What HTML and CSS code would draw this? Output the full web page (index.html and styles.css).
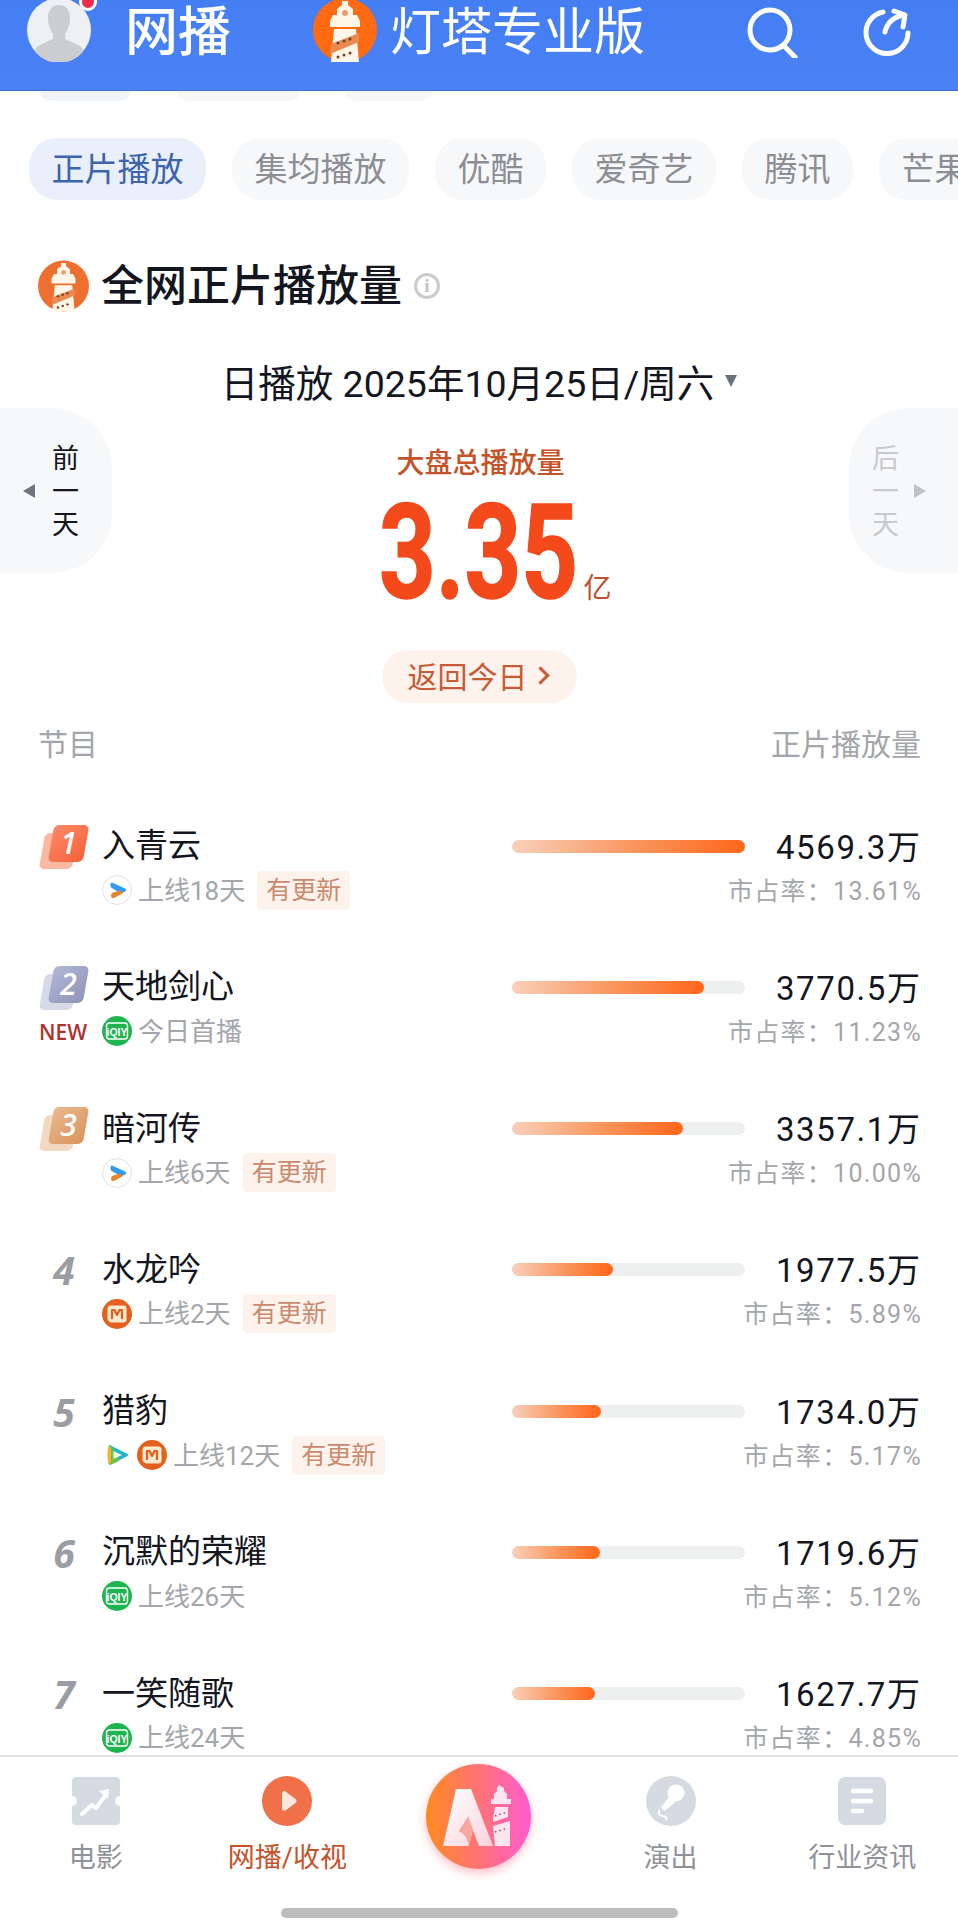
FILE: index.html
```html
<!DOCTYPE html>
<html lang="zh-CN">
<head>
    <meta charset="UTF-8">
    <meta name="viewport" content="width=device-width, initial-scale=1.0">
    <title>灯塔专业版 - 网播</title>
    <link rel="stylesheet" href="styles.css">
</head>
<body>
    <svg class="sprite" aria-hidden="true">
        <symbol id="tower" viewBox="0 0 64 64">
            <circle cx="32" cy="32" r="32" fill="currentColor"/>
            <path d="M29 3h6v4l5 4v6h4l3 6v6H17v-6l3-6h4v-6l5-4z" fill="#fff6ea"/>
            <circle cx="32" cy="15" r="3" fill="#e8a070"/>
            <path d="M21 31h22l3 33H18z" fill="#fff6ea"/>
            <path d="M18 46l28-11v9L17 56z" fill="#e98a52"/>
            <circle cx="25" cy="45" r="1.5" fill="#7a4020"/>
            <circle cx="31" cy="43" r="1.5" fill="#7a4020"/>
            <circle cx="37" cy="41" r="1.5" fill="#7a4020"/>
            <circle cx="25" cy="59" r="1.5" fill="#7a4020"/>
            <circle cx="31" cy="57" r="1.5" fill="#7a4020"/>
            <circle cx="37" cy="55" r="1.5" fill="#7a4020"/>
        </symbol>
        <symbol id="youku" viewBox="0 0 30 30">
            <circle cx="15" cy="15" r="14.4" fill="#fff" stroke="#dfe1e4" stroke-width="1"/>
            <path d="M10 7.500L23 13.500Q25.500 15 23 16.500L19 18.500L9 12.500Q7.500 8 10 7.500z" fill="#2f9cf0"/>
            <path d="M9 21Q9 17.500 13 17L18 15.500L21 18L13 22.500Q9 24 9 21z" fill="#e8822c"/>
        </symbol>
        <symbol id="iqiyi" viewBox="0 0 30 30">
            <circle cx="15" cy="15" r="15" fill="#1eb551"/>
            <rect x="4.500" y="7" width="21" height="16" rx="3" fill="none" stroke="#fff" stroke-width="1.400"/>
            <text x="15" y="19.500" text-anchor="middle" font-family="Liberation Sans Narrow, Liberation Sans, sans-serif" font-size="10.500" font-weight="700" fill="#fff">iQIY</text>
        </symbol>
        <symbol id="mango" viewBox="0 0 30 30">
            <circle cx="15" cy="15" r="15" fill="#e4601f"/>
            <path d="M9 6.500h12.500a3 3 0 0 1 3 3v11a3 3 0 0 1-3 3H10a4.500 4.500 0 0 1-4.500-4.500V10a3.500 3.500 0 0 1 3.500-3.500z" fill="#ffe9cf"/>
            <path d="M10 20v-9h2.500l2.500 5 2.500-5H20v9" fill="none" stroke="#e4601f" stroke-width="2.200" stroke-linejoin="round"/>
        </symbol>
        <symbol id="tencent" viewBox="0 0 30 30">
            <path d="M8 6.500L25 15L8 23.500z" fill="#21b6c8" stroke="#21b6c8" stroke-width="2.500" stroke-linejoin="round"/>
            <path d="M8 6.500L16 20L8 23.500z" fill="#6cc24a" stroke="#6cc24a" stroke-width="2.500" stroke-linejoin="round"/>
            <path d="M6.500 6C5 12 5 18 6.500 24L9 22.500V8z" fill="#f5b52a"/>
            <path d="M11.500 11L20 15L11.500 19z" fill="#e9fbe6"/>
        </symbol>
    </svg>

    <div class="page">
        <header class="app-header">
            <div class="avatar">
                <svg viewBox="0 0 64 64">
                    <circle cx="32" cy="32" r="32" fill="#eef0f3"/>
                    <path d="M21 20c0-9 5-13 11-13s11 4 11 13c0 6-2 12-5 16v5l15 7c2 1 3 4 3 6a32 32 0 0 1-48 0c0-2 1-5 3-6l15-7v-5c-3-4-5-10-5-16z" fill="#cccdcf"/>
                </svg>
                <span class="avatar-dot"></span>
            </div>
            <div class="header-section">网播</div>
            <svg class="header-logo"><use href="#tower"/></svg>
            <div class="header-brand">灯塔专业版</div>
            <button class="header-btn header-search" aria-label="搜索">
                <svg viewBox="0 0 52 52" fill="none" stroke="#fff" stroke-width="5" stroke-linecap="round">
                    <circle cx="24" cy="24" r="20"/>
                    <path d="M38 40l11 11"/>
                </svg>
            </button>
            <button class="header-btn header-share" aria-label="分享">
                <svg viewBox="0 0 50 50" fill="none" stroke="#fff" stroke-width="5" stroke-linecap="round" stroke-linejoin="round">
                    <path d="M22 5a21 21 0 1 0 25 21"/>
                    <path d="M24 25c2-9 8-15 19-17"/>
                    <path d="M33 4l11 4-2 12"/>
                </svg>
            </button>
        </header>

        <main class="content">
            <div class="ghost-tabs">
                <span class="ghost-tab ghost-tab-a"></span>
                <span class="ghost-tab ghost-tab-b"></span>
                <span class="ghost-tab ghost-tab-c"></span>
            </div>

            <nav class="tabs">
                <span class="tab active">正片播放</span>
                <span class="tab">集均播放</span>
                <span class="tab">优酷</span>
                <span class="tab">爱奇艺</span>
                <span class="tab">腾讯</span>
                <span class="tab">芒果</span>
            </nav>

            <div class="section-title">
                <svg class="section-logo"><use href="#tower"/></svg>
                <h1>全网正片播放量</h1>
                <span class="info-icon">i</span>
            </div>

            <div class="date-line">
                <span>日播放 2025年10月25日/周六</span>
                <span class="date-caret"></span>
            </div>

            <section class="hero">
                <div class="day-btn day-prev">
                    <span class="day-arrow"></span>
                    <span class="day-text">前<br>一<br>天</span>
                </div>
                <div class="total">
                    <div class="total-label">大盘总播放量</div>
                    <div class="total-amount">
                        <span class="total-number"><span>3.35</span></span>
                        <span class="total-unit">亿</span>
                    </div>
                </div>
                <div class="day-btn day-next">
                    <span class="day-text">后<br>一<br>天</span>
                    <span class="day-arrow"></span>
                </div>
            </section>

            <div class="today-wrap">
                <span class="today-btn"><span class="today-text">返回今日</span><i class="today-chevron"></i></span>
            </div>

            <div class="table-head">
                <span>节目</span>
                <span>正片播放量</span>
            </div>

            <div class="rank-list">
                <div class="rank-row">
                    <div class="rank-badge badge-1"><b>1</b></div>
                    <div class="show-name">入青云</div>
                    <div class="bar"><div class="bar-fill" style="width: 100%"></div></div>
                    <div class="show-value">4569.3<em>万</em></div>
                    <div class="rank-note"></div>
                    <div class="show-meta">
                        <svg class="platform"><use href="#youku"/></svg>
                        <span class="online">上线18天</span>
                        <span class="update-tag">有更新</span>
                    </div>
                    <div></div>
                    <div class="show-share">市占率：13.61%</div>
                </div>

                <div class="rank-row">
                    <div class="rank-badge badge-2"><b>2</b></div>
                    <div class="show-name">天地剑心</div>
                    <div class="bar"><div class="bar-fill" style="width: 82.5%"></div></div>
                    <div class="show-value">3770.5<em>万</em></div>
                    <div class="rank-note">NEW</div>
                    <div class="show-meta">
                        <svg class="platform"><use href="#iqiyi"/></svg>
                        <span class="online">今日首播</span>
                    </div>
                    <div></div>
                    <div class="show-share">市占率：11.23%</div>
                </div>

                <div class="rank-row">
                    <div class="rank-badge badge-3"><b>3</b></div>
                    <div class="show-name">暗河传</div>
                    <div class="bar"><div class="bar-fill" style="width: 73.5%"></div></div>
                    <div class="show-value">3357.1<em>万</em></div>
                    <div class="rank-note"></div>
                    <div class="show-meta">
                        <svg class="platform"><use href="#youku"/></svg>
                        <span class="online">上线6天</span>
                        <span class="update-tag">有更新</span>
                    </div>
                    <div></div>
                    <div class="show-share">市占率：10.00%</div>
                </div>

                <div class="rank-row">
                    <div class="rank-num">4</div>
                    <div class="show-name">水龙吟</div>
                    <div class="bar"><div class="bar-fill" style="width: 43.3%"></div></div>
                    <div class="show-value">1977.5<em>万</em></div>
                    <div class="rank-note"></div>
                    <div class="show-meta">
                        <svg class="platform"><use href="#mango"/></svg>
                        <span class="online">上线2天</span>
                        <span class="update-tag">有更新</span>
                    </div>
                    <div></div>
                    <div class="show-share">市占率：5.89%</div>
                </div>

                <div class="rank-row">
                    <div class="rank-num">5</div>
                    <div class="show-name">猎豹</div>
                    <div class="bar"><div class="bar-fill" style="width: 38%"></div></div>
                    <div class="show-value">1734.0<em>万</em></div>
                    <div class="rank-note"></div>
                    <div class="show-meta">
                        <svg class="platform platform-joined"><use href="#tencent"/></svg>
                        <svg class="platform"><use href="#mango"/></svg>
                        <span class="online">上线12天</span>
                        <span class="update-tag">有更新</span>
                    </div>
                    <div></div>
                    <div class="show-share">市占率：5.17%</div>
                </div>

                <div class="rank-row">
                    <div class="rank-num">6</div>
                    <div class="show-name">沉默的荣耀</div>
                    <div class="bar"><div class="bar-fill" style="width: 37.6%"></div></div>
                    <div class="show-value">1719.6<em>万</em></div>
                    <div class="rank-note"></div>
                    <div class="show-meta">
                        <svg class="platform"><use href="#iqiyi"/></svg>
                        <span class="online">上线26天</span>
                    </div>
                    <div></div>
                    <div class="show-share">市占率：5.12%</div>
                </div>

                <div class="rank-row">
                    <div class="rank-num">7</div>
                    <div class="show-name">一笑随歌</div>
                    <div class="bar"><div class="bar-fill" style="width: 35.6%"></div></div>
                    <div class="show-value">1627.7<em>万</em></div>
                    <div class="rank-note"></div>
                    <div class="show-meta">
                        <svg class="platform"><use href="#iqiyi"/></svg>
                        <span class="online">上线24天</span>
                    </div>
                    <div></div>
                    <div class="show-share">市占率：4.85%</div>
                </div>
            </div>
        </main>

        <footer class="bottom-nav">
            <div class="nav-items">
                <div class="nav-item">
                    <svg class="nav-icon" viewBox="0 0 50 50">
                        <path d="M5 1h40a4 4 0 0 1 4 4v15a5 5 0 0 0 0 10v15a4 4 0 0 1-4 4H5a4 4 0 0 1-4-4V30a5 5 0 0 0 0-10V5a4 4 0 0 1 4-4z" fill="#d6dae3"/>
                        <path d="M11 38l10-9 4 3 9-12" fill="none" stroke="#fff" stroke-width="4" stroke-linecap="round" stroke-linejoin="round"/>
                        <path d="M28 15l10-2-1 10z" fill="#fff"/>
                    </svg>
                    <span>电影</span>
                </div>
                <div class="nav-item active">
                    <svg class="nav-icon" viewBox="0 0 50 50">
                        <circle cx="25" cy="25" r="25" fill="#f0704a"/>
                        <path d="M20 17.500c0-2 2-3 3.500-2l10 7.500a2.500 2.500 0 0 1 0 4l-10 7.500c-1.500 1-3.500 0-3.500-2z" fill="#fde7de"/>
                    </svg>
                    <span>网播/收视</span>
                </div>
                <div class="nav-item nav-center">
                    <div class="ai-btn">
                        <svg viewBox="0 0 105 105">
                            <defs>
                                <linearGradient id="aiFill" x1="0" y1="0" x2="1" y2="1">
                                    <stop offset="0" stop-color="#ffffff"/>
                                    <stop offset="1" stop-color="#fbd3df"/>
                                </linearGradient>
                            </defs>
                            <path d="M30 25h15l22 57H53L42 53l-9 14c5 2 9 7 10 15H17z" fill="url(#aiFill)"/>
                            <path d="M33 67l9-14 5 14-4 15c-1-8-5-13-10-15z" fill="#f7a7a0"/>
                            <path d="M73 21l5 3v3l3 3v5h4v5H65v-5h3v-5l3-3v-3z" fill="#fde6ef"/>
                            <path d="M69 43h13v10l-15 5v-3z" fill="#fde6ef"/>
                            <path d="M67 62l17-5v25H69z" fill="#fde6ef"/>
                            <path d="M69 52l12-4M69 68l13-4" stroke="#a0406a" stroke-width="1.500" stroke-dasharray="1.500 3"/>
                        </svg>
                    </div>
                </div>
                <div class="nav-item">
                    <svg class="nav-icon" viewBox="0 0 50 50">
                        <circle cx="25" cy="25" r="25" fill="#d6dae3"/>
                        <circle cx="30" cy="17" r="8.500" fill="#fff"/>
                        <path d="M23.500 20l6 6-11 9-3.500-3.500z" fill="#fff"/>
                        <path d="M14 34c-3 3-1 6 3 6 3 .5 4 2 3 4" fill="none" stroke="#fff" stroke-width="2"/>
                    </svg>
                    <span>演出</span>
                </div>
                <div class="nav-item">
                    <svg class="nav-icon" viewBox="0 0 50 50">
                        <rect x="1" y="1" width="48" height="48" rx="7" fill="#d6dae3"/>
                        <path d="M16 15h18M16 25h18M16 35h9" stroke="#fff" stroke-width="4.500" stroke-linecap="round"/>
                    </svg>
                    <span>行业资讯</span>
                </div>
            </div>
            <div class="home-bar"></div>
        </footer>
    </div>
</body>
</html>
```

FILE: styles.css
```css
:root {
    --header-blue: #4b82f6;
    --orange: #f4491a;
    --orange-text: #c4532a;
    --ink: #14161f;
    --gray-text: #a3a6ab;
    --gray-bg: #f7f8fa;
    --peach-bg: #fdf2ec;
    --cjk: Roboto, "Noto Sans CJK SC", sans-serif;
}

* {
    box-sizing: border-box;
}

body {
    margin: 0;
    font-family: var(--cjk);
    color: var(--ink);
    background-color: white;
}

.sprite {
    display: block;
    width: 0;
    height: 0;
}

.page {
    width: 958px;
    height: 1921px;
    display: flex;
    flex-direction: column;
    overflow: hidden;
}

/* header */
.app-header {
    flex: none;
    height: 91px;
    display: flex;
    align-items: flex-start;
    padding-left: 27px;
    overflow: hidden;
    color: white;
    background: linear-gradient(180deg, #447ef3, var(--header-blue));
    border-bottom: 1px solid #3f73dc;
}

.avatar {
    position: relative;
    flex: none;
    width: 64px;
    height: 64px;
    margin-top: -2px;
}

.avatar svg {
    display: block;
    width: 64px;
    height: 64px;
}

.avatar-dot {
    position: absolute;
    top: -5px;
    left: 52px;
    width: 18px;
    height: 18px;
    border: 3px solid white;
    border-radius: 50%;
    background-color: #ec2c4a;
}

.header-section {
    margin-left: 34px;
    font-size: 53px;
    line-height: 66px;
    font-weight: 500;
}

.header-logo {
    flex: none;
    width: 64px;
    height: 64px;
    margin: -2px 0 0 82px;
    color: #ff6a13;
}

.header-brand {
    margin-left: 13px;
    font-size: 51px;
    line-height: 65px;
    font-weight: 400;
    white-space: nowrap;
}

.header-btn {
    flex: none;
    padding: 0;
    border: none;
    background: none;
}

.header-btn svg {
    display: block;
}

.header-search {
    margin: 6px 0 0 101px;
}

.header-search svg {
    width: 52px;
    height: 52px;
}

.header-share {
    margin: 7px 0 0 63px;
}

.header-share svg {
    width: 50px;
    height: 50px;
}

/* scrolling content */
.content {
    flex: 1;
    min-height: 0;
    overflow: hidden;
}

.ghost-tabs {
    display: flex;
    height: 10px;
    padding-left: 40px;
}

.ghost-tab {
    height: 10px;
    border-radius: 0 0 18px 18px;
    background-color: #f1f4fa;
}

.ghost-tab-a {
    width: 91px;
}

.ghost-tab-b {
    width: 123px;
    margin-left: 46px;
    background-color: #f6f7f9;
}

.ghost-tab-c {
    width: 87px;
    margin-left: 45px;
    background-color: #f6f7f9;
}

.tabs {
    display: flex;
    gap: 26px;
    margin-top: 37px;
    padding-left: 29px;
    white-space: nowrap;
}

.tab {
    flex: none;
    height: 62px;
    padding: 0 22.5px;
    border-radius: 28px;
    font-size: 33px;
    line-height: 63px;
    color: #8b8e94;
    background-color: var(--gray-bg);
}

.tab.active {
    color: #3d64ad;
    background-color: #e9effb;
}

.section-title {
    display: flex;
    align-items: center;
    height: 52px;
    margin-top: 60px;
    padding-left: 38px;
}

.section-logo {
    flex: none;
    width: 51px;
    height: 52px;
    color: #ee7030;
}

.section-title h1 {
    margin: 0 0 0 12px;
    font-size: 43px;
    line-height: 52px;
    font-weight: 500;
}

.info-icon {
    width: 26px;
    height: 26px;
    margin-left: 12px;
    border: 3px solid #c9cbce;
    border-radius: 50%;
    font-family: "Liberation Serif", serif;
    font-size: 19px;
    line-height: 20px;
    font-weight: 700;
    text-align: center;
    color: #c0c2c6;
}

.date-line {
    display: flex;
    justify-content: center;
    align-items: center;
    gap: 11px;
    height: 40px;
    margin-top: 48px;
    font-size: 37.5px;
    white-space: nowrap;
}

.date-caret {
    width: 0;
    height: 0;
    margin-top: 1px;
    border-left: 6px solid transparent;
    border-right: 6px solid transparent;
    border-top: 12px solid #6a6f7a;
}

/* daily total */
.hero {
    display: flex;
    justify-content: space-between;
    height: 165px;
    margin-top: 8px;
}

.day-btn {
    display: flex;
    align-items: center;
    width: 112px;
    background-color: var(--gray-bg);
}

.day-prev {
    gap: 17px;
    padding-left: 23px;
    border-radius: 0 60px 60px 0;
}

.day-next {
    width: 109px;
    gap: 15px;
    padding-left: 23px;
    border-radius: 60px 0 0 60px;
    color: #c8cacd;
}

.day-text {
    padding-top: 4px;
    font-size: 27px;
    line-height: 33px;
    color: #14161f;
    text-align: center;
}

.day-next .day-text {
    color: #c8cacd;
}

.day-arrow {
    width: 0;
    height: 0;
    border-top: 7px solid transparent;
    border-bottom: 7px solid transparent;
}

.day-prev .day-arrow {
    border-right: 12px solid #70747e;
}

.day-next .day-arrow {
    border-left: 12px solid #bfc2c8;
}

.total {
    display: flex;
    flex-direction: column;
    align-items: center;
    padding-top: 40px;
}

.total-label {
    font-size: 28px;
    line-height: 32px;
    font-weight: 500;
    color: var(--orange-text);
}

.total-amount {
    position: relative;
    height: 100px;
    margin-top: 23px;
}

.total-number {
    display: block;
    width: 196px;
    height: 100px;
}

.total-number span {
    display: inline-block;
    margin-left: -4px;
    transform: scaleX(0.75);
    transform-origin: left top;
    font-family: Roboto, sans-serif;
    font-size: 132px;
    line-height: 100px;
    font-weight: 700;
    -webkit-text-stroke: 1.5px var(--orange);
    color: var(--orange);
}

.total-unit {
    position: absolute;
    left: 201px;
    bottom: -2px;
    font-size: 28px;
    line-height: 32px;
    color: #c0502f;
}

.today-wrap {
    display: flex;
    justify-content: center;
    margin-top: 77px;
}

.today-btn {
    display: flex;
    align-items: center;
    width: 195px;
    height: 53px;
    padding-left: 26px;
    border-radius: 26px;
    font-size: 30px;
    color: #c85a36;
    background-color: var(--peach-bg);
}

.today-text {
    margin-top: -4px;
}

.today-chevron {
    width: 13px;
    height: 13px;
    margin: -2px 0 0 6px;
    border-top: 3px solid #c85a36;
    border-right: 3px solid #c85a36;
    transform: rotate(45deg);
}

.table-head {
    display: flex;
    justify-content: space-between;
    height: 32px;
    margin-top: 26px;
    padding: 0 37px 0 38px;
    font-size: 30px;
    line-height: 32px;
    color: var(--gray-text);
}

/* ranking rows */
.rank-list {
    display: flex;
    flex-direction: column;
    gap: 56.3px;
    margin-top: 65px;
}

.rank-row {
    display: grid;
    grid-template-columns: 64px 409px 233px 177px;
    grid-template-rows: 40px 40px;
    row-gap: 5px;
    padding-left: 39px;
    align-items: center;
}

.rank-badge {
    position: relative;
    width: 48px;
    height: 43px;
}

.rank-badge::before,
.rank-badge::after {
    content: "";
    position: absolute;
    border-radius: 5px;
    transform: skewX(-10deg);
}

.rank-badge::before {
    left: 3px;
    top: 8px;
    width: 33px;
    height: 36px;
}

.rank-badge::after {
    left: 12px;
    top: 0;
    width: 35px;
    height: 37px;
}

.rank-badge b {
    position: relative;
    z-index: 1;
    display: block;
    width: 41px;
    margin-left: 9px;
    font-family: "Open Sans", sans-serif;
    font-style: italic;
    font-size: 30px;
    line-height: 36px;
    font-weight: 600;
    text-align: center;
    color: #fff;
}

.badge-1::before {
    background-color: #fbb9a4;
}

.badge-1::after {
    background: linear-gradient(135deg, #ff8a66, #f4603c);
}

.badge-2::before {
    background-color: #d5d9e8;
}

.badge-2::after {
    background: linear-gradient(135deg, #b2b8d6, #8e94b8);
}

.badge-3::before {
    background-color: #f3d8c2;
}

.badge-3::after {
    background: linear-gradient(135deg, #eab98e, #d9935f);
}

.rank-num {
    width: 50px;
    font-family: "Open Sans", sans-serif;
    font-style: italic;
    font-size: 39px;
    font-weight: 700;
    text-align: center;
    color: #9a9da3;
}

.rank-note {
    font-family: "Open Sans", sans-serif;
    font-size: 21px;
    font-weight: 600;
    color: #b03030;
}

.show-name {
    margin-left: -1px;
    font-size: 33px;
    line-height: 40px;
    white-space: nowrap;
}

.bar {
    height: 13px;
    border-radius: 7px;
    background-color: #eef0f0;
}

.bar-fill {
    height: 100%;
    border-radius: 7px;
    background: linear-gradient(90deg, #f9d0ba, #f9935a 55%, #ff661a);
}

.show-value {
    justify-self: end;
    margin: 3px 2px 0 0;
    font-size: 33px;
    line-height: 40px;
    letter-spacing: 1.6px;
    white-space: nowrap;
}

.show-value em {
    font-style: normal;
    letter-spacing: 0;
}

.show-meta {
    display: flex;
    align-items: center;
    margin: -1px 0 1px -1px;
    font-size: 26px;
    color: var(--gray-text);
    white-space: nowrap;
}

.online {
    margin-top: -4px;
}

.platform {
    flex: none;
    width: 30px;
    height: 30px;
    margin-right: 6px;
}

.platform-joined {
    margin-right: 5px;
}

.update-tag {
    margin-left: 12px;
    padding: 0 9px;
    height: 39px;
    border-radius: 4px;
    font-size: 25px;
    line-height: 39px;
    color: #c98a6e;
    background-color: var(--peach-bg);
}

.show-share {
    justify-self: end;
    margin-top: -5px;
    font-size: 25px;
    letter-spacing: 1.3px;
    color: var(--gray-text);
    white-space: nowrap;
}

/* bottom navigation */
.bottom-nav {
    flex: none;
    display: flex;
    flex-direction: column;
    height: 166px;
    border-top: 2px solid #e3e3e3;
    background-color: white;
}

.nav-items {
    display: grid;
    grid-template-columns: repeat(5, 1fr);
    height: 151px;
}

.nav-item {
    display: flex;
    flex-direction: column;
    align-items: center;
    padding-top: 19px;
    font-size: 27px;
    line-height: 32px;
    color: #8f9298;
}

.nav-item.active {
    color: #c4532a;
}

.nav-icon {
    width: 50px;
    height: 50px;
    margin-bottom: 16px;
}

.nav-center {
    padding-top: 7px;
}

.ai-btn {
    width: 105px;
    height: 105px;
    border-radius: 50%;
    background: linear-gradient(90deg, #ff8a1e, #ff5ccf);
    box-shadow: 0 4px 10px rgba(255, 110, 130, 0.45);
}

.ai-btn svg {
    display: block;
    width: 105px;
    height: 105px;
}

.home-bar {
    align-self: center;
    width: 397px;
    height: 10px;
    border-radius: 5px;
    background-color: #bdbdbd;
}
```
